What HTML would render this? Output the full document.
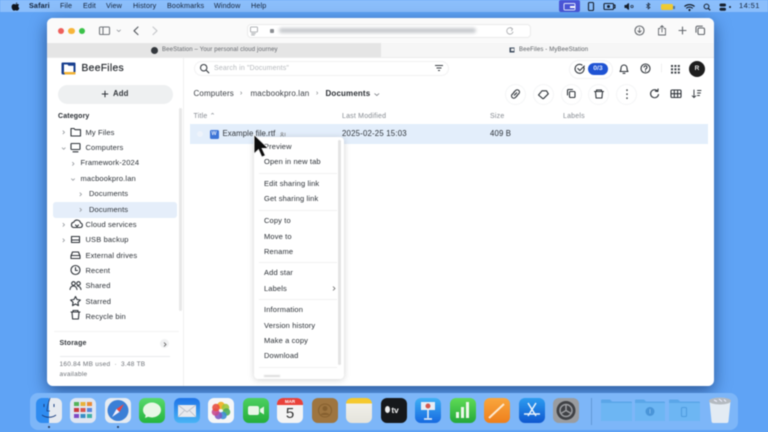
<!DOCTYPE html>
<html><head><meta charset="utf-8"><style>
*{box-sizing:border-box}
html,body{margin:0;padding:0;width:768px;height:432px;overflow:hidden;background:#5fa3f5;font-family:"Liberation Sans",sans-serif}
#r{position:absolute;left:0;top:0;width:768px;height:432px;overflow:hidden;filter:blur(.4px)}
.a{position:absolute}
.t{position:absolute;white-space:nowrap;font-size:7.5px;line-height:10px;color:#2b3036;transform:translateY(-5px);letter-spacing:.14px}
.m{color:#14233a;font-size:7.2px}
.g{color:#858a91}
svg{position:absolute;overflow:visible}
.ic{fill:none;stroke:#30353b;stroke-width:1.1;stroke-linecap:round;stroke-linejoin:round}
.c{position:absolute;width:21px;height:21px;border-radius:50%;border:1px solid #f4f5f6;background:#fff}
.d{position:absolute;top:398px;width:26px;height:25px;border-radius:6px}
</style></head><body><div id="r">
<!-- menu bar -->
<div class="a" style="left:0;top:0;width:768px;height:12px;background:#8bbefb"></div>
<svg style="left:11px;top:2px" width="9" height="9" viewBox="0 0 9 9"><path d="M6.2 0.4C5.4 .6 4.8 1.2 4.8 2 5.6 2 6.2 1.2 6.2 .4ZM4.5 2.4C3.9 2.4 3.5 2 2.8 2 1.6 2.1.6 3.1.6 4.8c0 1.7 1.2 3.8 2.2 3.8.6 0 .9-.4 1.7-.4s1 .4 1.7.4c1 0 1.8-1.5 2.1-2.5C7.200 5.500 6.900 3.400 8.100 2.800 7.500 2.100 6.800 2 6.300 2 5.500 2 5 2.400 4.500 2.400Z" fill="#10151c"/></svg>
<div class="t m" style="left:29px;top:5.500px;font-weight:700">Safari</div>
<div class="t m" style="left:60px;top:5.500px">File</div>
<div class="t m" style="left:83px;top:5.500px">Edit</div>
<div class="t m" style="left:106px;top:5.500px">View</div>
<div class="t m" style="left:133px;top:5.500px">History</div>
<div class="t m" style="left:167px;top:5.500px">Bookmarks</div>
<div class="t m" style="left:214px;top:5.500px">Window</div>
<div class="t m" style="left:251px;top:5.500px">Help</div>
<div class="a" style="left:559px;top:0;width:21px;height:12px;background:#4a55d6;border-radius:2px"></div>
<svg style="left:563px;top:2.500px" width="14" height="8"><rect x="1" y=".5" width="11" height="6.500" rx="1" fill="none" stroke="#dfe6ff"/><rect x="7" y="3" width="5" height="2" fill="#fff"/></svg>
<svg style="left:588px;top:2px" width="120" height="9" class="ic">
<rect x=".5" y=".5" width="5" height="8" rx="1" style="stroke:#17212f"/>
<rect x="16" y="1.500" width="9.500" height="6" rx="1" style="stroke:#17212f"/><circle cx="20.500" cy="4.500" r="1.500" fill="#17212f" style="stroke:none"/><path d="M25.500 3h1.500v3h-1.500" style="stroke:#17212f"/>
<path d="M37 3.500h1.500l2-1.800v5.600l-2-1.800H37Z" fill="#17212f" style="stroke:#17212f"/><circle cx="44" cy="4.500" r="1.200" style="stroke:#17212f;stroke-width:.7"/>
<path d="M58.500 2.500l3.500 3-1.800 1.500V1l1.800 1.500-3.500 3" style="stroke:#17212f;stroke-width:.7"/>
</svg>
<div class="a" style="left:661px;top:4px;width:12px;height:6px;background:#f1cd34;border-radius:1.500px"></div>
<div class="a" style="left:673px;top:5.500px;width:1.500px;height:3px;background:#53779f"></div>
<svg style="left:684px;top:2.500px" width="80" height="9">
<path d="M.5 3.500a7.500 7.500 0 0 1 10 0M2.300 5.300a4.800 4.800 0 0 1 6.400 0" fill="none" stroke="#17212f" stroke-width="1.200"/><circle cx="5.500" cy="7" r="1.100" fill="#17212f"/>
<circle cx="22.500" cy="3.500" r="2.400" fill="none" stroke="#17212f"/><path d="M24.200 5.300l2 2" stroke="#17212f" stroke-width="1.200"/>
<rect x="35.500" y=".5" width="6.500" height="3" rx="1.500" fill="#17212f"/><rect x="35.500" y="4.800" width="6.500" height="3" rx="1.500" fill="#17212f"/><circle cx="46" cy="4" r="1" fill="#17212f"/>
</svg>
<div class="t m" style="left:739px;top:5.500px;font-size:7.500px;letter-spacing:.4px">14:51</div>

<!-- window -->
<div class="a" style="left:47px;top:18px;width:667px;height:368px;border-radius:6px;box-shadow:0 5px 16px rgba(8,35,85,.6)"></div>
<div class="a" style="left:47px;top:18px;width:667px;height:368px;background:#fff;border-radius:6px;overflow:hidden">
<div class="a" style="left:0;top:0;width:667px;height:25px;background:#fafafa"></div>
<div class="a" style="left:0;top:25px;width:334px;height:14px;background:#e5e5e5"></div>
<div class="a" style="left:334px;top:25px;width:333px;height:14px;background:#f6f6f6"></div>
<div class="a" style="left:0;top:39px;width:667px;height:1px;background:#ececec"></div>
<div class="a" style="left:136px;top:40px;width:1px;height:328px;background:#f0f0f0"></div>
</div>
<div class="a" style="left:57.500px;top:27.500px;width:6.500px;height:6.500px;border-radius:50%;background:#ee5f5b"></div>
<div class="a" style="left:68px;top:27.500px;width:6.500px;height:6.500px;border-radius:50%;background:#f7b53a"></div>
<div class="a" style="left:78.500px;top:27.500px;width:6.500px;height:6.500px;border-radius:50%;background:#3cc24a"></div>
<svg style="left:99px;top:26px" width="60" height="10" class="ic">
<rect x=".5" y="1" width="10" height="7.500" rx="1" style="stroke:#74787d"/><path d="M4 1v7.500" style="stroke:#74787d"/>
<path d="M18 4l1.800 1.600L21.500 4" style="stroke:#90949a;stroke-width:.8"/>
<path d="M39 1l-4 3.800 4 3.800" style="stroke:#55595f"/><path d="M54 1l4 3.800-4 3.800" style="stroke:#c5c7ca"/>
</svg>
<div class="a" style="left:247px;top:24px;width:284px;height:14px;background:#fff;border:1px solid #ebebeb;border-radius:4px"></div>
<svg style="left:250px;top:26px" width="12" height="10" class="ic"><rect x=".5" y="1" width="7" height="5" rx=".8" style="stroke:#9b9ea2;stroke-width:.8"/><path d="M1.500 7.500h4M1.500 9h3" style="stroke:#9b9ea2;stroke-width:.8"/></svg>
<div class="a" style="left:270px;top:29px;width:4px;height:4px;background:#8c8f93;border-radius:1px"></div>
<div class="a" style="left:279px;top:28px;width:197px;height:5px;background:#c5c8cc;border-radius:3px;filter:blur(1.500px)"></div>
<svg style="left:505px;top:26px" width="10" height="10" class="ic"><path d="M7.500 3A3.200 3.200 0 1 0 8 6" style="stroke:#a5a7aa;stroke-width:.8"/><path d="M5.500 1.500l2 1.500-1 1.800" style="stroke:#a5a7aa;stroke-width:.8"/></svg>
<svg style="left:634px;top:25px" width="74" height="12" class="ic" >
<circle cx="5.500" cy="5.500" r="4.500" style="stroke:#64686d"/><path d="M5.500 3v4.500M3.800 5.800l1.700 1.700 1.700-1.700" style="stroke:#64686d;stroke-width:.9"/>
<path d="M26 3.500h-1.500v6.500h7V3.500H30M28 7V.8M26.300 2.300L28 .6l1.700 1.700" style="stroke:#64686d;stroke-width:.9"/>
<path d="M45 5.500h7M48.500 2v7" style="stroke:#64686d"/>
<rect x="64" y="3" width="6.500" height="6.500" rx="1.300" style="stroke:#64686d"/><path d="M62 7.300V2.500A1.300 1.300 0 0 1 63.300 1.200h5" style="stroke:#64686d"/>
</svg>
<!-- tabs -->
<div class="a" style="left:151px;top:46.500px;width:7px;height:7px;border-radius:50%;background:#34383d"></div>
<div class="t" style="left:162px;top:50.300px;font-size:6px;color:#65686d">BeeStation – Your personal cloud journey</div>
<svg style="left:509px;top:47px" width="7" height="6"><path d="M.5.500h5v5h-5z" fill="#3c4a5c"/><rect x="2" y="1.500" width="3" height="2.500" fill="#eee"/></svg>
<div class="t" style="left:519px;top:50.300px;font-size:6px;color:#5a5e63">BeeFiles - MyBeeStation</div>

<!-- logo -->
<svg style="left:61px;top:62px" width="15" height="13"><path d="M.5 1.500a1 1 0 0 1 1-1h12a1 1 0 0 1 1 1v10a1 1 0 0 1-1 1H2a1.500 1.500 0 0 1-1.500-1.500Z" fill="#183f8f"/><path d="M3 2.500h3.500l1 1.200h5v6.800H3Z" fill="#fff"/><path d="M2.500 10H14.500v1.500a1 1 0 0 1-1 1H4Z" fill="#f2b233"/></svg>
<div class="t" style="left:81.500px;top:68.500px;font-size:10.300px;color:#25292e;letter-spacing:.3px;-webkit-text-stroke:.2px #25292e">BeeFiles</div>
<!-- add -->
<div class="a" style="left:58px;top:85px;width:115px;height:19px;border-radius:10px;background:#eef0f1"></div>
<svg style="left:101px;top:90px" width="8" height="8"><path d="M4 .8v6.400M.8 4h6.400" stroke="#30343a" stroke-width="1"/></svg>
<div class="t" style="left:113px;top:94px;font-size:7.800px;font-weight:700;color:#33373c">Add</div>

<!-- sidebar -->
<div class="t" style="left:58px;top:116.500px;font-size:7px;font-weight:700;color:#292d32">Category</div>
<div class="a" style="left:53px;top:202px;width:124px;height:15.500px;background:#e5eefa;border-radius:3px"></div>
<div class="a" style="left:179px;top:108px;width:3px;height:203px;background:#e8e8e8;border-radius:2px"></div>
<div class="t" style="left:85.500px;top:132.500px">My Files</div>
<div class="t" style="left:85.500px;top:148px">Computers</div>
<div class="t" style="left:80.500px;top:163px">Framework-2024</div>
<div class="t" style="left:80.500px;top:178.500px">macbookpro.lan</div>
<div class="t" style="left:89px;top:194px">Documents</div>
<div class="t" style="left:89px;top:209.500px">Documents</div>
<div class="t" style="left:85.500px;top:224.500px">Cloud services</div>
<div class="t" style="left:85.500px;top:240px">USB backup</div>
<div class="t" style="left:85.500px;top:255.500px">External drives</div>
<div class="t" style="left:85.500px;top:270.500px">Recent</div>
<div class="t" style="left:85.500px;top:286px">Shared</div>
<div class="t" style="left:85.500px;top:301.500px">Starred</div>
<div class="t" style="left:85.500px;top:316.500px">Recycle bin</div>
<svg style="left:60px;top:125px" width="25" height="200" class="ic">
<path d="M3 5.800l1.500 1.500L3 8.800M2.200 22.800l1.500 1.500 1.500-1.500M12.500 37.300l1.500 1.500-1.500 1.500M11.500 53.800l1.500 1.500 1.500-1.500M20 67.800l1.500 1.500-1.500 1.500M20 83.300l1.500 1.500-1.500 1.500M3 98.300l1.500 1.500-1.500 1.500M3 113.800l1.500 1.500-1.500 1.500" style="stroke:#989ca1;stroke-width:.8"/>
<path d="M11 3.500h3l1 1.200h5.500v6.300H11Z"/>
<rect x="11" y="18.500" width="9" height="6" rx=".6"/><path d="M13 26.800h5"/>
<path d="M13.500 102.500a2.700 2.700 0 0 1 .3-5.300 3.600 3.600 0 0 1 6.800.8 2.300 2.300 0 0 1-.2 4.500ZM15.500 100l1.500 1.500 1.500-1.500"/>
<path d="M11.500 111.500h8v6h-8ZM11.500 115h8"/>
<path d="M11 133v-2l1.500-4h6l1.500 4v2.500H11ZM11 130.500h9"/>
<circle cx="15.500" cy="145" r="4.500"/><path d="M15.500 142.500V145.500h2"/>
<circle cx="13.500" cy="158.500" r="1.800"/><circle cx="18.500" cy="158.500" r="1.800"/><path d="M10 164.500c.3-2.500 1.500-3.500 3.500-3.500s3 1 3.500 3.500M17.500 161c1.800.2 3 1.200 3.500 3.500"/>
<path d="M15.500 171.500l1.500 3 3.400.5-2.500 2.300.6 3.300-3-1.600-3 1.600.6-3.300-2.500-2.300 3.400-.5Z"/>
<path d="M11 187h9M13 187v-1.500h5V187M12 187l.6 7h5.800l.6-7"/>
</svg>
<div class="a" style="left:54px;top:331px;width:125px;height:1px;background:#f3f3f3"></div>
<div class="t" style="left:59.500px;top:344px;font-size:7px;font-weight:700;color:#33373c">Storage</div>
<div class="a" style="left:160px;top:339px;width:9px;height:9px;border-radius:50%;background:#f0f1f2"></div>
<svg style="left:163px;top:341.500px" width="4" height="5"><path d="M1 .5l2 2-2 2" fill="none" stroke="#555" stroke-width=".8"/></svg>
<div class="a" style="left:60px;top:355.500px;width:110px;height:1.500px;background:#e9eaec"></div>
<div class="t" style="left:59.500px;top:365px;font-size:6.500px;color:#6d7177;letter-spacing:.25px">160.84 MB used &nbsp;·&nbsp; 3.48 TB</div>
<div class="t" style="left:59.500px;top:375px;font-size:6.500px;color:#6d7177;letter-spacing:.25px">available</div>

<!-- search -->
<div class="a" style="left:194px;top:61px;width:255px;height:15px;border:1px solid #f1f1f2;border-radius:8px;background:#fff"></div>
<svg style="left:199px;top:63px" width="11" height="11" class="ic"><circle cx="4.700" cy="4.700" r="3.200" style="stroke:#3b4046"/><path d="M7 7l2.800 2.800" style="stroke:#3b4046"/></svg>
<div class="t g" style="left:214px;top:68.500px;font-size:7px;color:#b5b8bc;letter-spacing:.15px">Search in "Documents"</div>
<svg style="left:434px;top:64px" width="10" height="8"><path d="M1 1.500h8M2.500 4h5M4 6.500h2" stroke="#3a3f45" stroke-width=".9"/></svg>
<!-- top right -->
<div class="a" style="left:569px;top:60px;width:44px;height:19px;border:1px solid #f3f3f4;border-radius:10px"></div>
<svg style="left:574px;top:63px" width="12" height="12" class="ic"><path d="M9.700 4a4.500 4.500 0 1 1-1.700-2" /><path d="M3.800 5.500l2 2 4.500-4.500"/></svg>
<div class="a" style="left:588px;top:63px;width:20px;height:11.500px;background:#1f53d3;border-radius:6px;color:#dbe6ff;font-size:6.800px;line-height:11.500px;text-align:center;font-weight:700">0/3</div>
<svg style="left:618px;top:63px" width="90" height="13" class="ic">
<path d="M2 8.500c1-1 1-2 1-3.500a3 3 0 0 1 6 0c0 1.500 0 2.500 1 3.500ZM5 10.300h2"/>
<circle cx="27.500" cy="5.500" r="4.500"/><path d="M26 4.200a1.500 1.500 0 1 1 2.200 1.400c-.5.300-.7.500-.7 1M27.500 8v.2"/>
<path d="M43.500 1v8" style="stroke:#f0f0f0"/>
</svg>
<svg style="left:671px;top:64.500px" width="10" height="10" fill="#3a3f45"><rect width="2" height="2"/><rect x="3.400" width="2" height="2"/><rect x="6.800" width="2" height="2"/><rect y="3.300" width="2" height="2"/><rect x="3.400" y="3.300" width="2" height="2"/><rect x="6.800" y="3.300" width="2" height="2"/><rect y="6.600" width="2" height="2"/><rect x="3.400" y="6.600" width="2" height="2"/><rect x="6.800" y="6.600" width="2" height="2"/></svg>
<div class="a" style="left:689px;top:61px;width:16px;height:16px;border-radius:50%;background:#1e1e1e;color:#eee;font-size:6.500px;font-weight:700;line-height:16px;text-align:center">R</div>

<!-- breadcrumb -->
<div class="t" style="left:193.500px;top:94px;font-size:8px;color:#3a3e44">Computers</div>
<div class="t" style="left:240px;top:94px;font-size:7px;color:#6c7076">›</div>
<div class="t" style="left:250.500px;top:94px;font-size:8px;color:#3a3e44">macbookpro.lan</div>
<div class="t" style="left:316px;top:94px;font-size:7px;color:#6c7076">›</div>
<div class="t" style="left:325.500px;top:94px;font-size:8px;font-weight:700;color:#2b2f34">Documents</div>
<svg style="left:374px;top:92.500px" width="6" height="4"><path d="M.5.500l2.300 2 2.300-2" fill="none" stroke="#6c7076" stroke-width=".8"/></svg>
<!-- action buttons -->
<div class="c" style="left:505px;top:83.500px"></div><div class="c" style="left:533px;top:83.500px"></div><div class="c" style="left:560.500px;top:83.500px"></div><div class="c" style="left:588px;top:83.500px"></div><div class="c" style="left:616px;top:83.500px"></div>
<svg style="left:505px;top:83px" width="205" height="22" class="ic">
<path d="M9 9.500l-1.800 1.800a2.200 2.200 0 0 0 3.200 3.200l1.800-1.800M12 12.500l1.800-1.800a2.200 2.200 0 0 0-3.200-3.200L8.800 9.300M9.300 12.200l2.400-2.400" />
<path d="M33.500 12l3.500-4.200h4.500l1.800 3-4.500 4.500a1 1 0 0 1-1.400 0Z"/>
<rect x="63" y="7.500" width="5.500" height="6" rx="1" transform="translate(1.500 1)"/><path d="M62.500 12V7.500a1 1 0 0 1 1-1h4"/>
<path d="M89.500 8.500h9M91.500 8.500V7h5v1.500M90.500 8.500l.6 6.500h5.800l.6-6.500"/>
<path d="M122 7v.3M122 11v.3M122 15v.3" style="stroke-width:1.500"/>
<path d="M152.500 8a4 4 0 1 0 1 3.500M150.300 8.200l2.500.3.300-2.500"/>
<rect x="166" y="7" width="10" height="7.500" rx="1"/><path d="M166 10.700h10M169.300 7v7.500M172.600 7v7.500"/>
<path d="M189 7v7.500M187.200 12.800l1.800 1.800 1.800-1.800M192.500 7.500h3.500M192.500 10h3M192.500 12.500h2" style="stroke-width:.9"/>
</svg>

<!-- table -->
<div class="t g" style="left:193.500px;top:116.500px;font-size:7px;letter-spacing:.2px">Title ⌃</div>
<div class="t g" style="left:342px;top:116.500px;font-size:7px;letter-spacing:.2px">Last Modified</div>
<div class="t g" style="left:490px;top:116.500px;font-size:7px;letter-spacing:.2px">Size</div>
<div class="t g" style="left:563px;top:116.500px;font-size:7px;letter-spacing:.2px">Labels</div>
<div class="a" style="left:190px;top:124px;width:518px;height:20px;background:#e3eefb"></div>
<div class="a" style="left:197px;top:131px;width:6px;height:6px;border-radius:50%;background:#eef3fb"></div>
<div class="a" style="left:209.500px;top:129.500px;width:9px;height:9px;background:#3d74d6;border-radius:1.500px;color:#dce7fb;font-size:5.500px;line-height:9px;text-align:center;font-weight:700">W</div>
<div class="t" style="left:222.500px;top:134px;font-size:7.800px;color:#2f3338;letter-spacing:.08px">Example file.rtf</div>
<svg style="left:280px;top:131.500px" width="7" height="5"><circle cx="2" cy="1.500" r="1" fill="none" stroke="#777" stroke-width=".6"/><path d="M.5 4.500c.2-1 .8-1.300 1.500-1.300s1.300.3 1.500 1.300M5 .8v3.500" fill="none" stroke="#777" stroke-width=".6"/></svg>
<div class="t" style="left:342px;top:134px;font-size:7.800px;letter-spacing:.2px">2025-02-25 15:03</div>
<div class="t" style="left:490px;top:134px;font-size:7.800px">409 B</div>

<!-- menu -->
<div class="a" style="left:254px;top:137px;width:90px;height:242px;background:#fff;border-radius:4px;box-shadow:0 1px 7px rgba(0,0,0,.18)"></div>
<div class="a" style="left:338px;top:140px;width:2.500px;height:225px;background:#e4e4e4;border-radius:2px"></div>
<div class="t" style="left:264px;top:146.500px">Preview</div>
<div class="t" style="left:264px;top:162px">Open in new tab</div>
<div class="a" style="left:259px;top:173px;width:78px;height:1px;background:#f1f1f1"></div>
<div class="t" style="left:264px;top:184px">Edit sharing link</div>
<div class="t" style="left:264px;top:199px">Get sharing link</div>
<div class="a" style="left:259px;top:210px;width:78px;height:1px;background:#f1f1f1"></div>
<div class="t" style="left:264px;top:221px">Copy to</div>
<div class="t" style="left:264px;top:236.500px">Move to</div>
<div class="t" style="left:264px;top:251.500px">Rename</div>
<div class="a" style="left:259px;top:262px;width:78px;height:1px;background:#f1f1f1"></div>
<div class="t" style="left:264px;top:273px">Add star</div>
<div class="t" style="left:264px;top:288.500px">Labels</div>
<svg style="left:332px;top:286px" width="4" height="5"><path d="M1 .5l2 2-2 2" fill="none" stroke="#666" stroke-width=".8"/></svg>
<div class="a" style="left:259px;top:299px;width:78px;height:1px;background:#f1f1f1"></div>
<div class="t" style="left:264px;top:310px">Information</div>
<div class="t" style="left:264px;top:325.500px">Version history</div>
<div class="t" style="left:264px;top:341px">Make a copy</div>
<div class="t" style="left:264px;top:356px">Download</div>
<div class="a" style="left:259px;top:367px;width:78px;height:1px;background:#f1f1f1"></div>
<div class="a" style="left:264px;top:375px;width:16px;height:2px;background:#dcdcdc;filter:blur(.6px)"></div>
<!-- cursor -->
<svg style="left:252px;top:133px" width="18" height="27"><path d="M2 1.500V21l4.500-4.300 3.300 7.300 3.600-1.500-3.300-7h6.400Z" fill="#0c0c0c" stroke="#f4f4f4" stroke-width=".9"/></svg>

<!-- dock -->
<div class="a" style="left:30px;top:393px;width:708px;height:37px;background:#7db6f8;border-radius:8px"></div>
<div class="d" style="left:35.500px;background:linear-gradient(90deg,#2f8cf0 50%,#e6eaf0 50%)"></div>
<svg style="left:35.500px;top:398px" width="26" height="25"><path d="M14 0c-2 6-3 10-3 13h3" fill="none" stroke="#1a3f80" stroke-width=".8"/><path d="M8 6v3M18 6v3M6 17c4 3 10 3 14 0" fill="none" stroke="#1a3f80" stroke-width="1"/></svg>
<div class="a" style="left:48px;top:426px;width:2px;height:2px;border-radius:50%;background:#1e3050"></div>
<div class="d" style="left:70px;background:#dfe6f2"></div>
<svg style="left:74px;top:402px" width="18" height="17"><g><rect x="0" y="0" width="5" height="4" fill="#54b35a"/><rect x="6.500" y="0" width="5" height="4" fill="#e8b23b"/><rect x="13" y="0" width="5" height="4" fill="#ea8a36"/><rect x="0" y="6" width="5" height="4" fill="#c93a3e"/><rect x="6.500" y="6" width="5" height="4" fill="#d8564f"/><rect x="13" y="6" width="5" height="4" fill="#5a85d8"/><rect x="0" y="12" width="5" height="4" fill="#7e49c4"/><rect x="6.500" y="12" width="5" height="4" fill="#3a8ec5"/><rect x="13" y="12" width="5" height="4" fill="#3fb0a4"/></g></svg>
<div class="d" style="left:104.500px;background:#e6ebf1"></div>
<svg style="left:104.500px;top:398px" width="26" height="25"><circle cx="13" cy="12.500" r="10.500" fill="#3b7fd6"/><path d="M19 6l-7.500 5 3 3Z" fill="#e44"/><path d="M7 19l4.500-8 3 3Z" fill="#eef"/></svg>
<div class="a" style="left:117px;top:426px;width:2px;height:2px;border-radius:50%;background:#1e3050"></div>
<div class="d" style="left:139px;background:linear-gradient(#58d96d,#26b53e)"></div>
<svg style="left:139px;top:398px" width="26" height="25"><ellipse cx="13" cy="12" rx="9" ry="7.500" fill="#e9f7e6"/><path d="M7 16l-1 4 5-2Z" fill="#e9f7e6"/></svg>
<div class="d" style="left:173.500px;background:linear-gradient(#1e73e8,#49b4f5)"></div>
<svg style="left:173.500px;top:398px" width="26" height="25"><rect x="4" y="7" width="18" height="12" fill="#e8e9ee"/><path d="M4 7l9 7 9-7M4 19l7-7M22 19l-7-7" fill="none" stroke="#b7bcc6" stroke-width=".8"/></svg>
<div class="d" style="left:208px;background:#f5f6f7"></div>
<svg style="left:208px;top:398px" width="26" height="25"><circle cx="13" cy="7.500" r="3.800" fill="#f2b535"/><circle cx="17.500" cy="9.500" r="3.800" fill="#9fc63a" opacity=".9"/><circle cx="18.500" cy="14" r="3.800" fill="#4fae5a" opacity=".9"/><circle cx="15" cy="17.500" r="3.800" fill="#3f8fd4" opacity=".9"/><circle cx="10.500" cy="17.500" r="3.800" fill="#7f5ac2" opacity=".9"/><circle cx="7.500" cy="14" r="3.800" fill="#c94a8e" opacity=".9"/><circle cx="8" cy="9.500" r="3.800" fill="#e8503f" opacity=".9"/></svg>
<div class="d" style="left:242.500px;background:linear-gradient(#4cd060,#25ae3b)"></div>
<svg style="left:242.500px;top:398px" width="26" height="25"><rect x="5" y="8" width="11" height="9" rx="2" fill="#e8f6e6"/><path d="M17 11l4-2.500v8L17 14Z" fill="#e8f6e6"/></svg>
<div class="d" style="left:277px;background:#f4f4f4;overflow:hidden"><div class="a" style="left:0;top:0;width:26px;height:7px;background:#e9413a;color:#fff;font-size:4.500px;line-height:7px;text-align:center;font-weight:700">MAR</div><div class="a" style="left:0;top:7px;width:26px;font-size:15px;line-height:18px;text-align:center;color:#333">5</div></div>
<div class="d" style="left:311.500px;background:#9e7540"></div>
<svg style="left:311.500px;top:398px" width="26" height="25"><circle cx="13" cy="12.500" r="6.500" fill="none" stroke="#86602f"/><circle cx="13" cy="10.500" r="2.500" fill="#86602f"/><path d="M8.500 17c1-3 8-3 9 0" fill="#86602f"/></svg>
<div class="d" style="left:346px;background:linear-gradient(#f5c92e 0,#f5c92e 22%,#f0efe9 22%,#e5e4dc 100%)"></div>
<div class="d" style="left:380.500px;background:#16181b;color:#eee;font-size:8.500px;line-height:25px;text-align:center;font-weight:700;letter-spacing:-.2px">&#8201;&#8201;tv</div>
<div class="a" style="left:384.500px;top:406px;width:5px;height:7px;border-radius:50%;background:#eee"></div>
<div class="d" style="left:415px;background:linear-gradient(#3fb0f5,#1669e0)"></div>
<svg style="left:415px;top:398px" width="26" height="25"><rect x="6" y="4" width="14" height="8" fill="#e8edf5"/><circle cx="13" cy="8" r="2.500" fill="#d4594f"/><path d="M13 12v8M9 21h8" stroke="#f0f3f8" stroke-width="1.500"/></svg>
<div class="d" style="left:449.500px;background:linear-gradient(#5fdb55,#24a83a)"></div>
<svg style="left:449.500px;top:398px" width="26" height="25" fill="#eef8ea"><rect x="6" y="14" width="3" height="6"/><rect x="11" y="9" width="3" height="11"/><rect x="16" y="4" width="3" height="16"/></svg>
<div class="d" style="left:484px;background:linear-gradient(#f9a63d,#ee7f1c)"></div>
<svg style="left:484px;top:398px" width="26" height="25"><path d="M5 20L20 6" stroke="#fde9cf" stroke-width="2"/></svg>
<div class="d" style="left:518.500px;background:linear-gradient(#2c9cf0,#0f57cf)"></div>
<svg style="left:518.500px;top:398px" width="26" height="25"><path d="M9 5l8 13M17 5L9 18M5 16h16" stroke="#e8f2fc" stroke-width="1.500" fill="none"/></svg>
<div class="d" style="left:553px;background:#9a9c9f"></div>
<svg style="left:553px;top:398px" width="26" height="25"><circle cx="13" cy="12.500" r="9.500" fill="#3f4145"/><circle cx="13" cy="12.500" r="6" fill="none" stroke="#9a9ca0" stroke-width="1.500"/><path d="M13 12.500V6.500M13 12.500l5.200 3M13 12.500l-5.200 3" stroke="#9a9ca0" stroke-width="1.500"/></svg>
<div class="a" style="left:591px;top:398px;width:1px;height:27px;background:#6199d8"></div>
<svg style="left:601px;top:398px" width="100" height="25">
<path d="M0 2.500a1 1 0 0 1 1-1h8l2 2h19a1 1 0 0 1 1 1V22a1 1 0 0 1-1 1H1a1 1 0 0 1-1-1Z" fill="#5aa6e8"/><path d="M0 5h31v17a1 1 0 0 1-1 1H1a1 1 0 0 1-1-1Z" fill="#6db6f3"/>
<path d="M34 2.500a1 1 0 0 1 1-1h8l2 2h18a1 1 0 0 1 1 1V22a1 1 0 0 1-1 1H35a1 1 0 0 1-1-1Z" fill="#5aa6e8"/><path d="M34 5h30v17a1 1 0 0 1-1 1H35a1 1 0 0 1-1-1Z" fill="#6db6f3"/>
<circle cx="49" cy="13.500" r="4.500" fill="#4a95d8"/><path d="M49 11v4.500" stroke="#7dbdf3"/>
<path d="M68 2.500a1 1 0 0 1 1-1h8l2 2h19a1 1 0 0 1 1 1V22a1 1 0 0 1-1 1H69a1 1 0 0 1-1-1Z" fill="#5aa6e8"/><path d="M68 5h31v17a1 1 0 0 1-1 1H69a1 1 0 0 1-1-1Z" fill="#6db6f3"/>
<rect x="80.500" y="9.500" width="5" height="9" rx="1" fill="none" stroke="#4f9ade"/>
</svg>
<svg style="left:708px;top:396px" width="24" height="28"><path d="M1.500 5h21l-2 20a2 2 0 0 1-2 2H5.500a2 2 0 0 1-2-2Z" fill="#e3ebf3"/><ellipse cx="12" cy="5" rx="11" ry="3.500" fill="#b4bac0"/><path d="M6 4l3 1.500M11 3l3 2.500M16 3.500l2 2" stroke="#eef" stroke-width="1"/></svg>
</div></body></html>
